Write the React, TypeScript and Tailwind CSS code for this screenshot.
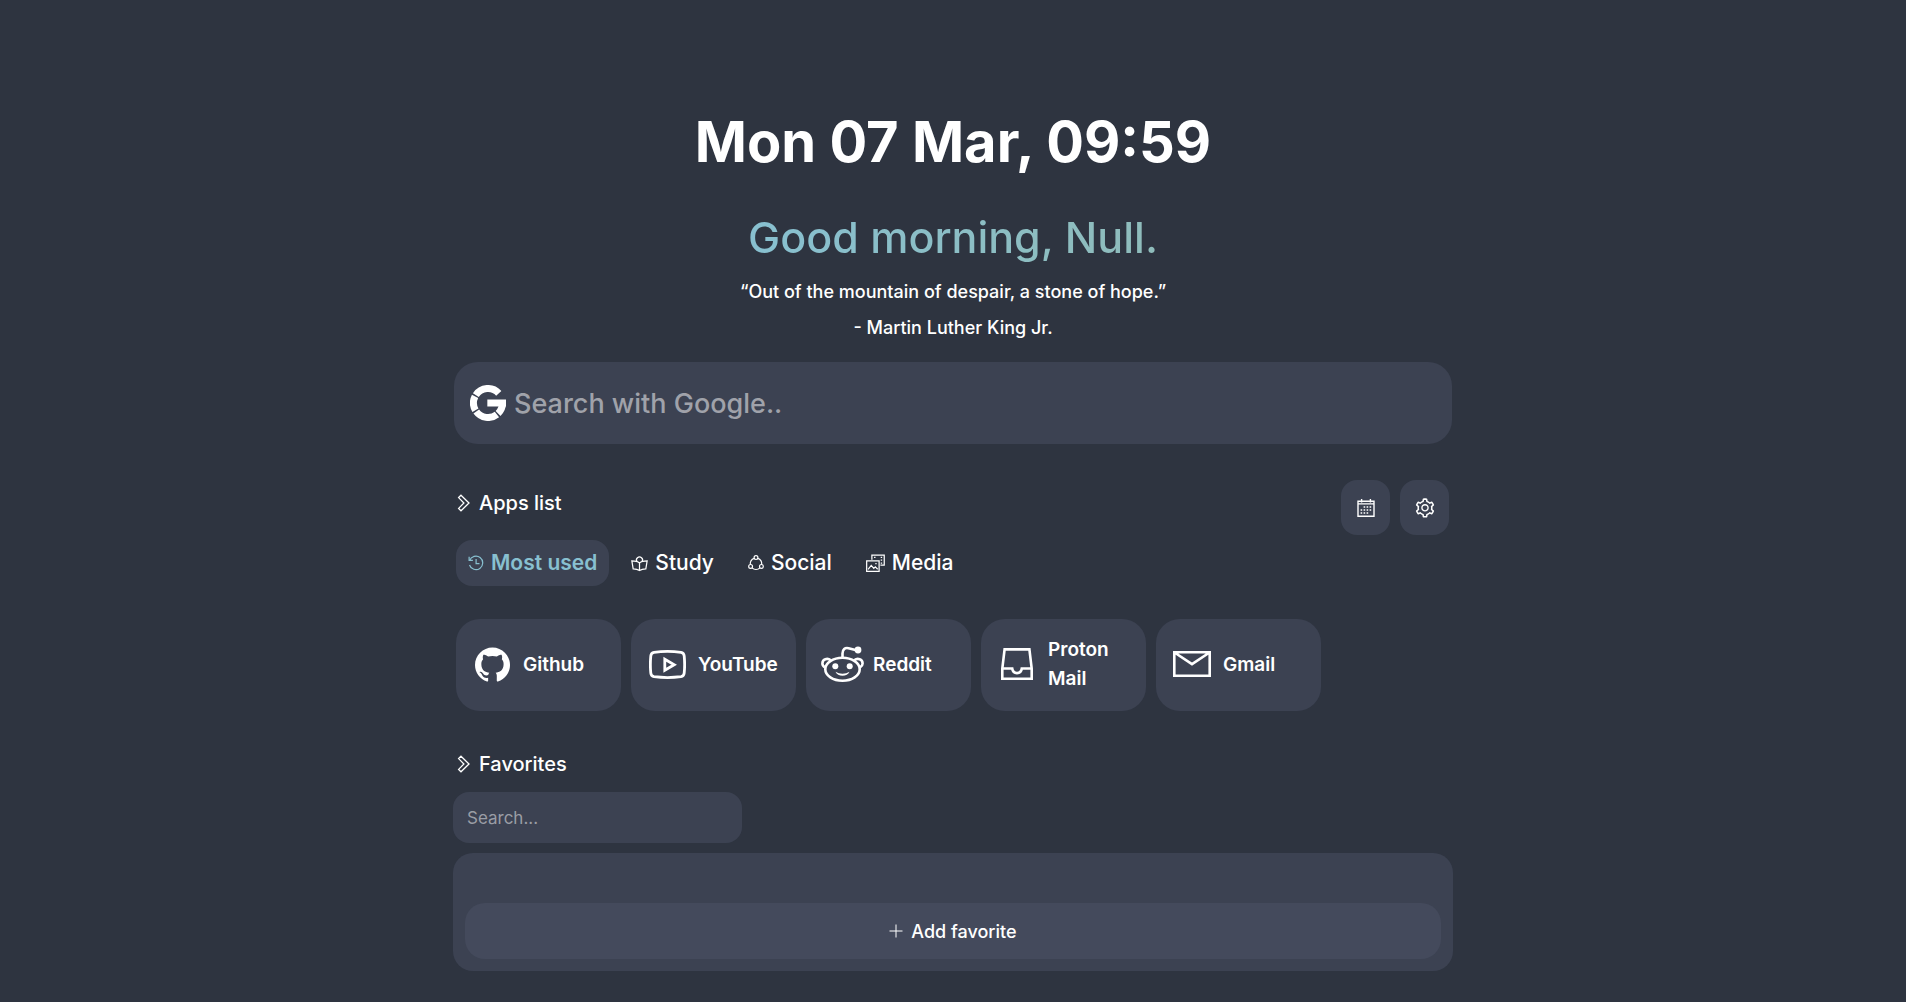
import React, { useState } from 'react';
import { AiOutlineSetting } from 'react-icons/ai';
import { SiGithub } from 'react-icons/si';

interface IconProps {
    className?: string;
}

const ChevronIcon: React.FC<IconProps> = ({ className }) => (
    <svg viewBox="0 0 14 18" className={className} fill="none" stroke="currentColor" strokeWidth="1.3">
        <path d="M4 1.2 12 9 4 16.8 1.6 14.4 6.9 9 1.6 3.6Z" />
    </svg>
);

const GoogleIcon: React.FC<IconProps> = ({ className }) => (
    <svg viewBox="0 0 108 108" className={className} fill="none" stroke="currentColor" strokeWidth="21">
        <path d="M17.5 30.3A43.5 43.5 0 0 1 86.3 24.9" />
        <path d="M16.3 75.8A43.5 43.5 0 0 1 15.2 34.3" />
        <path d="M80.8 88.3A43.5 43.5 0 0 1 18.8 79.6" />
        <path d="M97.5 54A43.5 43.5 0 0 1 84.2 85.3" />
        <path d="M52 54h56" />
    </svg>
);

const HistoryIcon: React.FC<IconProps> = ({ className }) => (
    <svg viewBox="0 0 17 17" className={className} fill="none" stroke="currentColor" strokeWidth="1.3">
        <path d="M1.2 1.8v4h4" />
        <path d="M1.7 5.8A7.2 7.2 0 1 1 1.6 10.6" />
        <path d="M8.6 4.3v4.9h3.6" />
    </svg>
);

const StudyIcon: React.FC<IconProps> = ({ className }) => (
    <svg viewBox="0 0 18 17" className={className} fill="none" stroke="currentColor" strokeWidth="1.3">
        <path d="M6.4 6.6a3.2 3.2 0 1 1 5.2 0" />
        <path d="M9 7.9v7.9M9 7.9C7.2 6.4 4.5 5.8.9 5.8L2.3 14.2C5 14.2 7.2 14.7 9 15.9 10.8 14.7 13 14.2 15.7 14.2L17.1 5.8C13.5 5.8 10.8 6.4 9 7.9Z" />
    </svg>
);

const SocialIcon: React.FC<IconProps> = ({ className }) => (
    <svg viewBox="0 0 16 16" className={className} fill="none" stroke="currentColor" strokeWidth="1.2">
        <circle cx="8" cy="2.6" r="1.9" />
        <circle cx="2.6" cy="11.4" r="1.9" />
        <circle cx="13.4" cy="11.4" r="1.9" />
        <path d="M6.2 3.4A6 6 0 0 0 2.3 9.5M9.8 3.4a6 6 0 0 1 3.9 6.1M4 12.9a6 6 0 0 0 8 0" />
    </svg>
);

const MediaIcon: React.FC<IconProps> = ({ className }) => (
    <svg viewBox="0 0 20 19" className={className} fill="none" stroke="currentColor" strokeWidth="1.3">
        <path d="M6.2 5.5V.8h13v10.4h-4" />
        <path d="M8.5 3h1.5M15.5 3h1.5M15.5 6h1.5M15.5 9h1.5" />
        <path d="M.7 6.7h13.1v11.2H.7z" />
        <path d="m2.2 15.6 3.3-4.1 2.7 3.2 1.6-1.6 2.5 2.5" />
        <path d="M9.8 9.6h1.4" />
    </svg>
);

const CalendarIcon: React.FC<IconProps> = ({ className }) => (
    <svg viewBox="0 0 18 18" className={className} fill="none" stroke="currentColor" strokeWidth="1.4">
        <path d="M1 2.2h16v15H1zM1 4.9h16M4.6 0v3.4M13.4 0v3.4" />
        <path
            strokeWidth="1.6"
            d="M6.6 8h1.6M9.6 8h1.6M12.6 8h1.6M3.6 11h1.6M6.6 11h1.6M9.6 11h1.6M12.6 11h1.6M3.6 14h1.6M6.6 14h1.6M9.6 14h1.6"
        />
    </svg>
);

const YoutubeIcon: React.FC<IconProps> = ({ className }) => (
    <svg viewBox="0 0 37 29" className={className} fill="none" stroke="currentColor" strokeWidth="2.8">
        <path d="M5 2.3C13 1.3 24 1.3 32 2.3c2 .3 3 1.5 3.2 3.5.6 6 .6 11.4 0 17.4-.2 2-1.2 3.2-3.2 3.5-8 1-19 1-27 0-2-.3-3-1.5-3.2-3.5-.6-6-.6-11.4 0-17.4C2 3.8 3 2.6 5 2.3Z" />
        <path d="M15.8 9.2v11L25.2 14.7Z" />
    </svg>
);

const RedditIcon: React.FC<IconProps> = ({ className }) => (
    <svg viewBox="0 0 43 36" className={className} fill="none" stroke="currentColor" strokeWidth="2.6">
        <ellipse cx="21.5" cy="23.2" rx="17.2" ry="11.5" />
        <path d="M9.8 14.2C6.5 11.6 1.4 13 1.4 17.4c0 1.8 1 3 2.6 4M33.2 14.2c3.3-2.6 8.4-1.2 8.4 3.2 0 1.8-1 3-2.6 4" />
        <path d="M21.5 11.5V7.5c0-4 2.5-6.2 6-5.3l8 2" />
        <g fill="currentColor" stroke="none">
            <circle cx="37" cy="4" r="3.4" />
            <circle cx="14.3" cy="20.3" r="3" />
            <circle cx="28.7" cy="20.3" r="3" />
            <path d="M14.5 25.7c4 2.6 10 2.6 14 0-2 5.4-12 5.4-14 0Z" />
        </g>
    </svg>
);

const InboxIcon: React.FC<IconProps> = ({ className }) => (
    <svg viewBox="0 0 32 32" className={className} fill="none" stroke="currentColor" strokeWidth="2.6">
        <path d="M1.3 20.5V30.7h29.4V20.5L28.4 1.4H3.6Z" />
        <path d="M1.3 20.5h9.9c.4 3 1.9 4.6 4.8 4.6s4.4-1.6 4.8-4.6h9.9" />
    </svg>
);

const MailIcon: React.FC<IconProps> = ({ className }) => (
    <svg viewBox="0 0 38 26" className={className} fill="none" stroke="currentColor" strokeWidth="2.6">
        <path d="M1.3 1.3h35.4v23.4H1.3zM1.5 1.5 19 13.2 36.5 1.5" />
    </svg>
);

const PlusIcon: React.FC<IconProps> = ({ className }) => (
    <svg viewBox="0 0 14 14" className={className} fill="none" stroke="currentColor">
        <path d="M7 .5v13M.5 7h13" />
    </svg>
);

const tabs = [
    { name: 'Most used', icon: <HistoryIcon className="size-4" /> },
    { name: 'Study', icon: <StudyIcon className="size-[17px]" /> },
    { name: 'Social', icon: <SocialIcon className="size-4" /> },
    { name: 'Media', icon: <MediaIcon className="size-[19px]" /> },
];

const apps = [
    { name: 'Github', icon: <SiGithub className="size-[35px]" /> },
    { name: 'YouTube', icon: <YoutubeIcon className="h-[29px] w-[37px]" /> },
    { name: 'Reddit', icon: <RedditIcon className="h-9 w-[43px]" /> },
    { name: 'Proton Mail', icon: <InboxIcon className="size-8" /> },
    { name: 'Gmail', icon: <MailIcon className="h-[26px] w-[38px]" /> },
];

const SectionTitle: React.FC<{ title: string }> = ({ title }) => (
    <h3 className="flex items-center gap-2 pl-1 text-[20px] leading-8 font-medium">
        <ChevronIcon className="h-[18px] w-[14px]" />
        {title}
    </h3>
);

const App: React.FC = () => {
    const [activeTab, setActiveTab] = useState('Most used');

    return (
        <div className="min-h-screen bg-[#2e3440] font-['Inter',sans-serif] text-white">
            <main className="mx-auto w-full max-w-[1000px] pt-[110px] pb-8">
                {/* Header */}
                <header className="text-center">
                    <h1 className="text-[56px] leading-16 font-bold">Mon 07 Mar, 09:59</h1>
                    <h2 className="mx-auto mt-[35px] w-fit bg-linear-to-r from-[#88c0d0] to-[#8fbcbb] bg-clip-text text-[43px] leading-14 font-medium text-transparent">
                        Good morning, Null.
                    </h2>
                    <p className="mt-[9px] text-[18px] leading-9 font-medium">
                        “Out of the mountain of despair, a stone of hope.”
                        <br />- Martin Luther King Jr.
                    </p>
                </header>

                {/* Web search */}
                <form
                    className="mx-px mt-4 flex h-[82px] items-center gap-2 rounded-3xl bg-[#3c4252] px-4"
                    onSubmit={(e) => e.preventDefault()}
                >
                    <GoogleIcon className="size-9 shrink-0" />
                    <input
                        type="text"
                        aria-label="Search with Google"
                        placeholder="Search with Google.."
                        className="h-full w-full bg-transparent text-[27px] font-medium outline-none placeholder:text-[#a0a2aa]"
                    />
                </form>

                {/* Apps */}
                <section className="mt-9">
                    <div className="flex items-start justify-between pr-1">
                        <div className="pt-[7px]">
                            <SectionTitle title="Apps list" />
                        </div>
                        <div className="flex gap-[10px]">
                            <button aria-label="Calendar" className="flex h-[55px] w-[49px] items-center justify-center rounded-2xl bg-[#3c4252]">
                                <CalendarIcon className="size-[18px]" />
                            </button>
                            <button aria-label="Settings" className="flex h-[55px] w-[49px] items-center justify-center rounded-2xl bg-[#3c4252]">
                                <AiOutlineSetting className="size-[22px]" />
                            </button>
                        </div>
                    </div>

                    <div className="mt-[5px] flex gap-[10px] pl-[3px]">
                        {tabs.map((tab) => (
                            <button
                                key={tab.name}
                                onClick={() => setActiveTab(tab.name)}
                                className={`flex h-[46px] items-center gap-[7px] rounded-2xl px-3 text-[21px] ${activeTab === tab.name ? 'bg-[#3c4252] font-semibold text-[#88c0d0]' : 'font-medium'}`}
                            >
                                {tab.icon}
                                {tab.name}
                            </button>
                        ))}
                    </div>

                    <div className="mt-[33px] flex flex-wrap gap-[10px] pl-[3px]">
                        {apps.map((app) => (
                            <a
                                key={app.name}
                                href="#"
                                className="flex h-[92px] w-[165px] items-center gap-[9px] rounded-3xl bg-[#3c4252] pr-2 pb-[2px] pl-[14px] text-[19px] leading-[29px] font-semibold"
                            >
                                <span className="flex w-11 shrink-0 justify-center">{app.icon}</span>
                                {app.name}
                            </a>
                        ))}
                    </div>
                </section>

                {/* Favorites */}
                <section className="mt-[37px]">
                    <SectionTitle title="Favorites" />
                    <input
                        type="text"
                        aria-label="Search favorites"
                        placeholder="Search..."
                        className="mt-3 block h-[51px] w-[289px] rounded-2xl bg-[#3c4252] px-[14px] text-[17px] outline-none placeholder:text-[#9a9da5]"
                    />
                    <div className="mt-[10px] rounded-[20px] bg-[#3c4252] px-3 pt-[50px] pb-3">
                        <button className="flex h-14 w-full items-center justify-center gap-2 rounded-[20px] bg-[#444a5c] text-[18px] font-medium">
                            <PlusIcon className="size-[14px]" />
                            Add favorite
                        </button>
                    </div>
                </section>
            </main>
        </div>
    );
};

export default App;
